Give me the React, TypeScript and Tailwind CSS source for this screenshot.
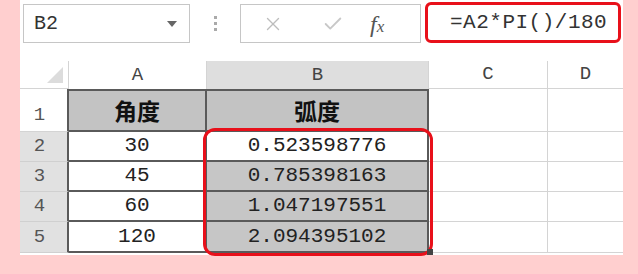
import { X, Check } from "lucide-react";

const mono = "font-['Liberation_Mono','Noto_Sans_CJK_SC',monospace]";

const rows = [
  { n: "2", a: "30", b: "0.523598776" },
  { n: "3", a: "45", b: "0.785398163" },
  { n: "4", a: "60", b: "1.047197551" },
  { n: "5", a: "120", b: "2.094395102" },
];

export default function App() {
  return (
    <div className="w-[638px] h-[274px] bg-[#ffcfcf] pl-[20px] pr-[15px] pb-[19px]">
      <div className={`relative w-full h-full bg-white flex flex-col ${mono}`}>
        {/* formula toolbar */}
        <div className="h-[61px] flex items-start pt-[4px]">
          <div className="ml-[3px] w-[167px] h-[39px] border border-[#c6c6c6] flex items-center justify-between pl-[10px] pr-[12px]">
            <span className="text-[20px] text-[#333]">B2</span>
            <span className="w-0 h-0 border-l-[5px] border-r-[5px] border-t-[6px] border-l-transparent border-r-transparent border-t-[#666]" />
          </div>
          <div className="w-[50px] h-[39px] flex flex-col items-center justify-center gap-[3px]">
            <span className="w-[3px] h-[3px] bg-[#aaa]" />
            <span className="w-[3px] h-[3px] bg-[#aaa]" />
            <span className="w-[3px] h-[3px] bg-[#aaa]" />
          </div>
          <div className="w-[181px] h-[39px] border border-[#c6c6c6] flex items-center pl-[21px]">
            <X size={22} strokeWidth={1.5} className="text-[#bdbdbd]" />
            <Check size={22} strokeWidth={2} className="text-[#c8c8c8] ml-[38px]" />
            <span className="ml-[26px] font-['Liberation_Serif',serif] italic text-[24px] leading-none text-[#555]">
              f<span className="text-[17px]">x</span>
            </span>
          </div>
          <div className="ml-[4px] -mt-[2px] w-[196px] h-[41px] border-[3px] border-[#e8101a] rounded-[6px] flex items-center pl-[22px]">
            <span className="text-[21px] text-[#333] tracking-[0.5px]">=A2*PI()/180</span>
          </div>
        </div>

        {/* sheet */}
        <div className="grid grid-cols-[49px_138px_222px_119px_1fr] grid-rows-[28px_43px_30px_30px_30px_31px] text-[#222]">
          {/* column headers */}
          <div className="border-r border-b border-[#d4d4d4] flex items-end justify-end pr-[5px] pb-[5px]">
            <span className="w-0 h-0 border-l-[16px] border-b-[16px] border-l-transparent border-b-[#dcdcdc]" />
          </div>
          <div className="border-r border-[#d4d4d4] flex items-center justify-center text-[19px] text-[#444]">A</div>
          <div className="bg-[#dedede] border-r border-[#d4d4d4] flex items-center justify-center text-[19px] text-[#444]">B</div>
          <div className="border-r border-b border-[#d4d4d4] flex items-center justify-center text-[19px] text-[#444]">C</div>
          <div className="border-b border-[#d4d4d4] flex items-center justify-center text-[19px] text-[#444]">D</div>

          {/* row 1 */}
          <div className="border-r-2 border-b border-r-[#5a5a5a] border-b-[#d4d4d4] flex items-end justify-center pr-[8px] pb-[2px] text-[19px] text-[#555]">1</div>
          <div className="bg-[#c3c3c3] border-t-2 border-r-2 border-b-2 border-[#5a5a5a] flex items-center justify-center font-['Noto_Sans_CJK_SC',sans-serif] font-bold text-[23px] text-[#111]">角度</div>
          <div className="bg-[#c3c3c3] border-t-2 border-r-2 border-b-2 border-[#5a5a5a] flex items-center justify-center font-['Noto_Sans_CJK_SC',sans-serif] font-bold text-[23px] text-[#111]">弧度</div>
          <div className="border-r border-b border-[#d4d4d4]" />
          <div className="border-b border-[#d4d4d4]" />

          {rows.map((r) => (
            <div key={r.n} className="contents">
              <div className="bg-[#e1e1e1] border-r-2 border-b border-r-[#5a5a5a] border-b-[#d0d0d0] flex items-center justify-center pr-[8px] text-[19px] text-[#555]">
                {r.n}
              </div>
              <div className="border-r-2 border-b-2 border-[#5a5a5a] flex items-center justify-center text-[21px]">
                {r.a}
              </div>
              <div className={`${r.n === "2" ? "bg-white" : "bg-[#c6c6c6]"} border-r-2 border-b-2 border-[#5a5a5a] flex items-center justify-center text-[21px]`}>
                {r.b}
              </div>
              <div className="border-r border-b border-[#d4d4d4]" />
              <div className="border-b border-[#d4d4d4]" />
            </div>
          ))}
        </div>

        {/* annotation + fill handle */}
        <div className="absolute left-[183px] top-[128px] w-[230px] h-[128px] border-[3px] border-[#e8101a] rounded-[12px]" />
        <div className="absolute left-[407px] top-[249px] w-[6px] h-[6px] bg-[#444]" />
      </div>
    </div>
  );
}
